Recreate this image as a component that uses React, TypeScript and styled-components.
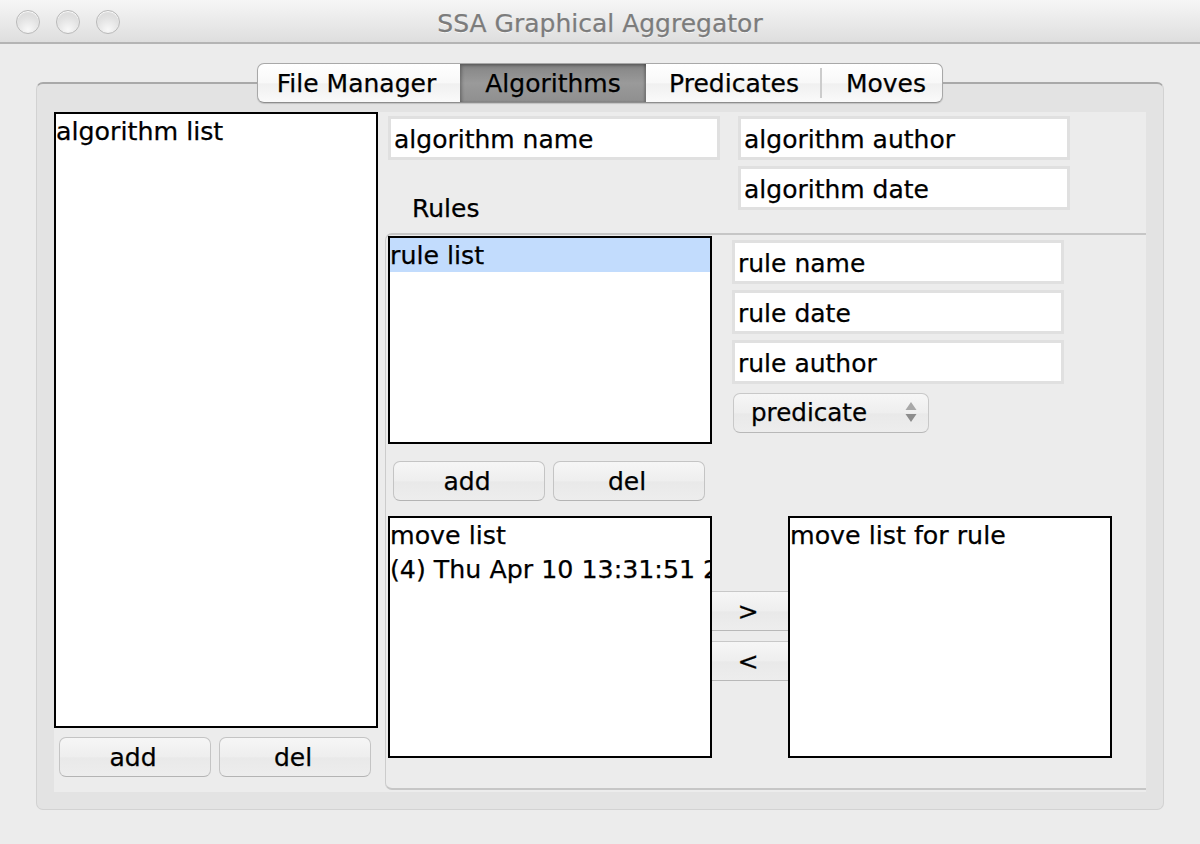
import React from "react";
import styled, { createGlobalStyle } from "styled-components";

const GlobalStyle = createGlobalStyle`
  html, body {
    margin: 0;
    padding: 0;
    background: #ececec;
  }
  * {
    box-sizing: border-box;
  }
  body {
    font-family: "DejaVu Sans", "Liberation Sans", sans-serif;
    font-size: 25.3px;
    color: #000;
    -webkit-text-stroke: 0.25px;
  }
`;

const Window = styled.div`
  width: 1200px;
  height: 844px;
  background: #ececec;
  overflow: hidden;
`;

const TitleBar = styled.div`
  height: 44px;
  display: flex;
  align-items: center;
  position: relative;
  padding: 2px 0 0 16px;
  gap: 16px;
  background: linear-gradient(#f6f6f6, #e8e8e8 60%, #dedede);
  border-bottom: 2px solid #b4b4b4;
`;

const Light = styled.div`
  width: 24px;
  height: 24px;
  border-radius: 50%;
  border: 1px solid #b9b9b9;
  background: radial-gradient(circle at 50% 85%, #f8f8f8, #e2e2e2 55%, #d6d6d6);
  box-shadow: inset 0 1px 1px #fff;
`;

const Title = styled.div`
  position: absolute;
  left: 0;
  right: 0;
  padding-top: 2px;
  text-align: center;
  font-size: 25px;
  color: #7c7c7c;
  text-shadow: 0 1px 0 #f8f8f8;
`;

const Content = styled.div`
  padding: 19px 36px 0;
`;

const TabRow = styled.div`
  display: flex;
  justify-content: center;
  height: 40px;
  margin-bottom: -21px;
  position: relative;
  z-index: 1;
  font-size: 25px;
`;

const TabGroup = styled.div`
  display: flex;
  height: 40px;
  border: 1px solid #a8a8a8;
  border-bottom-color: #8e8e8e;
  border-radius: 7px;
  overflow: hidden;
  background: linear-gradient(#ffffff, #f8f8f8 50%, #f0f0f0 52%, #fafafa);
  box-shadow: 0 1px 1px rgba(0, 0, 0, 0.15);
`;

const Tab = styled.div<{ $active?: boolean; $width: number; $divider?: boolean; $shift?: number }>`
  width: ${(p) => p.$width}px;
  display: flex;
  align-items: center;
  justify-content: center;
  padding-top: 1px;
  position: relative;
  text-indent: ${(p) => p.$shift ?? 0}px;
  background: ${(p) =>
    p.$active ? "linear-gradient(#848484, #9a9a9a 50%, #8f8f8f)" : "transparent"};
  box-shadow: ${(p) =>
    p.$active ? "inset 2px 2px 3px rgba(0,0,0,.25), inset -2px 0 2px rgba(0,0,0,.2)" : "none"};

  &::after {
    content: "";
    display: ${(p) => (p.$divider ? "block" : "none")};
    position: absolute;
    right: 0;
    top: 4px;
    bottom: 4px;
    width: 2px;
    background: #cccccc;
  }
`;

const TabPanel = styled.div`
  height: 728px;
  padding: 27px 17px 17px;
  background: #e3e3e3;
  border: 1px solid #d2d2d2;
  border-top: 2px solid #a9a9a9;
  border-radius: 7px;
`;

const PanelGrid = styled.div`
  display: grid;
  grid-template-columns: 324px 762px;
  gap: 6px;
  height: 680px;
  margin-top: 1px;
  background: #ececec;
`;

const ListBox = styled.div<{ $height: number }>`
  width: 324px;
  height: ${(p) => p.$height}px;
  background: #fff;
  border: 2px solid #000;
  overflow: hidden;
  white-space: nowrap;
`;

const ListText = styled.div`
  line-height: 34px;
  padding-top: 1px;
  margin-bottom: -1px;
`;

const SelectedRow = styled.div`
  background: #c2dcfd;
  height: 34px;
  line-height: 36px;
`;

const ButtonRow = styled.div<{ $top: number }>`
  display: flex;
  gap: 8px;
  margin: ${(p) => p.$top}px 0 0 5px;
`;

const PushButton = styled.div`
  width: 152px;
  height: 40px;
  display: flex;
  align-items: center;
  justify-content: center;
  padding-right: 4px;
  font-size: 25px;
  border: 1px solid #c4c4c4;
  border-bottom-color: #b4b4b4;
  border-radius: 7px;
  background: linear-gradient(#f6f6f6, #eeeeee 50%, #e9e9e9 52%, #ededed);
`;

const RightColumn = styled.div`
  display: flex;
  flex-direction: column;
  min-width: 0;
`;

const Header = styled.div`
  height: 121px;
  display: grid;
  grid-template-columns: 332px 332px;
  column-gap: 18px;
  padding: 4px 0 0 4px;
`;

const HeaderLeft = styled.div`
  display: flex;
  flex-direction: column;
  justify-content: flex-start;
`;

const RulesLabel = styled.div`
  margin: 31px 0 0 24px;
  line-height: 36px;
  font-size: 25px;
`;

const FieldStack = styled.div`
  display: flex;
  flex-direction: column;
  gap: 6px;
`;

const Field = styled.div`
  width: 332px;
  height: 44px;
  background: #fff;
  border: 3px solid #e0e0e0;
  padding: 2px 0 0 3px;
  line-height: 38px;
  font-size: 25px;
  white-space: nowrap;
`;

const RulesBox = styled.div`
  height: 557px;
  margin-left: 1px;
  padding: 1px 0 0 2px;
  border-top: 2px solid #c6c6c6;
  border-left: 1px solid #cccccc;
  border-bottom: 2px solid #c6c6c6;
  border-top-left-radius: 7px;
  border-bottom-left-radius: 7px;
`;

const RuleTop = styled.div`
  display: flex;
  gap: 20px;
`;

const RuleFields = styled.div`
  display: flex;
  flex-direction: column;
  padding-top: 4px;
`;

const SelectBox = styled.div`
  width: 196px;
  height: 40px;
  margin: 9px 0 0 1px;
  padding: 0 11px 2px 17px;
  display: flex;
  align-items: center;
  justify-content: space-between;
  font-size: 24.6px;
  border: 1px solid #c8c8c8;
  border-bottom-color: #b8b8b8;
  border-radius: 7px;
  background: linear-gradient(#f6f6f6, #eeeeee 50%, #e9e9e9 52%, #ededed);
`;

const MoveRow = styled.div`
  display: flex;
  margin-top: 15px;
`;

const ArrowColumn = styled.div`
  width: 76px;
  padding-top: 75px;
  display: flex;
  flex-direction: column;
  gap: 10px;
`;

const ArrowButton = styled.div`
  height: 40px;
  display: flex;
  align-items: center;
  justify-content: center;
  padding-right: 4px;
  border-top: 1px solid #c8c8c8;
  border-bottom: 1px solid #b8b8b8;
  background: linear-gradient(#f6f6f6, #eeeeee 50%, #e9e9e9 52%, #ededed);
`;

function SelectArrows() {
  return (
    <svg width="12" height="22" viewBox="0 0 12 22">
      <path d="M6 1 L11.5 9 L0.5 9 Z" fill="#a8a8a8" />
      <path d="M6 21 L11.5 13 L0.5 13 Z" fill="#8c8c8c" />
    </svg>
  );
}

export default function App() {
  return (
    <>
      <GlobalStyle />
      <Window>
        <TitleBar>
          <Light />
          <Light />
          <Light />
          <Title>SSA Graphical Aggregator</Title>
        </TitleBar>
        <Content>
          <TabRow>
            <TabGroup>
              <Tab $width={202} $shift={-5}>
                File Manager
              </Tab>
              <Tab $width={186} $active>
                Algorithms
              </Tab>
              <Tab $width={176} $divider>
                Predicates
              </Tab>
              <Tab $width={120} $shift={8}>
                Moves
              </Tab>
            </TabGroup>
          </TabRow>
          <TabPanel>
            <PanelGrid>
              <div>
                <ListBox $height={616}>
                  <ListText>algorithm list</ListText>
                </ListBox>
                <ButtonRow $top={9}>
                  <PushButton>add</PushButton>
                  <PushButton>del</PushButton>
                </ButtonRow>
              </div>
              <RightColumn>
                <Header>
                  <HeaderLeft>
                    <Field>algorithm name</Field>
                    <RulesLabel>Rules</RulesLabel>
                  </HeaderLeft>
                  <FieldStack>
                    <Field>algorithm author</Field>
                    <Field>algorithm date</Field>
                  </FieldStack>
                </Header>
                <RulesBox>
                  <RuleTop>
                    <ListBox $height={208}>
                      <SelectedRow>rule list</SelectedRow>
                    </ListBox>
                    <RuleFields>
                      <FieldStack>
                        <Field>rule name</Field>
                        <Field>rule date</Field>
                        <Field>rule author</Field>
                      </FieldStack>
                      <SelectBox>
                        predicate
                        <SelectArrows />
                      </SelectBox>
                    </RuleFields>
                  </RuleTop>
                  <ButtonRow $top={17}>
                    <PushButton>add</PushButton>
                    <PushButton>del</PushButton>
                  </ButtonRow>
                  <MoveRow>
                    <ListBox $height={242}>
                      <ListText>move list</ListText>
                      <ListText>(4) Thu Apr 10 13:31:51 2014</ListText>
                    </ListBox>
                    <ArrowColumn>
                      <ArrowButton>&gt;</ArrowButton>
                      <ArrowButton>&lt;</ArrowButton>
                    </ArrowColumn>
                    <ListBox $height={242}>
                      <ListText>move list for rule</ListText>
                    </ListBox>
                  </MoveRow>
                </RulesBox>
              </RightColumn>
            </PanelGrid>
          </TabPanel>
        </Content>
      </Window>
    </>
  );
}
